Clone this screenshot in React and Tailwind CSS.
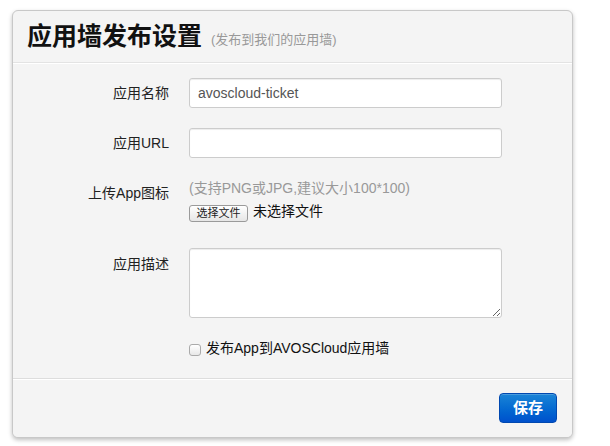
export default function App() {
  const font = { fontFamily: '"Liberation Sans", "Noto Sans CJK SC", sans-serif' };

  return (
    <div className="w-[610px] h-[446px] bg-white pt-[10px] pl-[12px]" style={font}>
      <div className="w-[561px] h-[428px] flex flex-col rounded-[6px] border border-[#c8c8c8] bg-[#f4f4f4] shadow-[0_2px_4px_rgba(0,0,0,0.25)] overflow-hidden">
        {/* Header */}
        <div className="h-[52px] shrink-0 flex items-center pl-[14px] border-b border-[#e3e3e3] shadow-[0_1px_0_#fff]">
          <h1 className="text-[25px] font-bold text-[#111] leading-none">应用墙发布设置</h1>
          <span className="ml-[9px] mt-[6px] text-[13px] text-[#999]">(发布到我们的应用墙)</span>
        </div>

        {/* Form body */}
        <div className="flex-1 pt-[15px] text-[14px] text-[#222]">
          <div className="flex items-center">
            <label className="w-[156px] text-right">应用名称</label>
            <input
              className="ml-[20px] w-[313px] h-[30px] px-[8px] bg-white border border-[#ccc] rounded-[3px] text-[14px] text-[#555] shadow-[inset_0_1px_1px_rgba(0,0,0,0.075)] outline-none"
              defaultValue="avoscloud-ticket"
              style={font}
            />
          </div>

          <div className="flex items-center mt-[20px]">
            <label className="w-[156px] text-right">应用URL</label>
            <input
              className="ml-[20px] w-[313px] h-[30px] px-[8px] bg-white border border-[#ccc] rounded-[3px] text-[14px] text-[#555] shadow-[inset_0_1px_1px_rgba(0,0,0,0.075)] outline-none"
              style={font}
            />
          </div>

          <div className="flex mt-[20px]">
            <label className="w-[156px] text-right pt-[5px] leading-[20px]">上传App图标</label>
            <div className="ml-[20px]">
              <div className="leading-[20px] text-[#999]">(支持PNG或JPG,建议大小100*100)</div>
              <div className="flex items-start mt-[7px] pb-[6px]">
                <button className="w-[59px] h-[17px] text-[11px] leading-[15px] text-[#222] bg-gradient-to-b from-white to-[#e6e6e6] border border-[#9a9a9a] rounded-[3px]">
                  选择文件
                </button>
                <span className="ml-[5px] -mt-[4px] text-[14px] text-[#111] leading-[20px]">未选择文件</span>
              </div>
            </div>
          </div>

          <div className="flex mt-[20px]">
            <label className="w-[156px] text-right pt-[6px] leading-[20px]">应用描述</label>
            <textarea
              className="ml-[20px] w-[313px] h-[70px] bg-white border border-[#ccc] rounded-[3px] shadow-[inset_0_1px_1px_rgba(0,0,0,0.075)] outline-none"
            />
          </div>

          <div className="flex items-center mt-[20px] pl-[176px] leading-[20px]">
            <span className="w-[12px] h-[12px] mt-[4px] rounded-[3px] border border-[#aaa] bg-gradient-to-b from-white to-[#e8e8e8]" />
            <span className="ml-[5px] text-[#111]">发布App到AVOSCloud应用墙</span>
          </div>
        </div>

        {/* Footer */}
        <div className="h-[59px] shrink-0 flex items-center justify-end pr-[15px] border-t border-[#ddd] shadow-[inset_0_1px_0_#fff] bg-[#f4f4f4]">
          <button className="w-[58px] h-[30px] rounded-[4px] border border-[#0048b0] bg-gradient-to-b from-[#1a84d6] to-[#0050cc] text-white font-bold text-[15px] shadow-[inset_0_1px_0_rgba(255,255,255,0.2)]">
            保存
          </button>
        </div>
      </div>
    </div>
  );
}
